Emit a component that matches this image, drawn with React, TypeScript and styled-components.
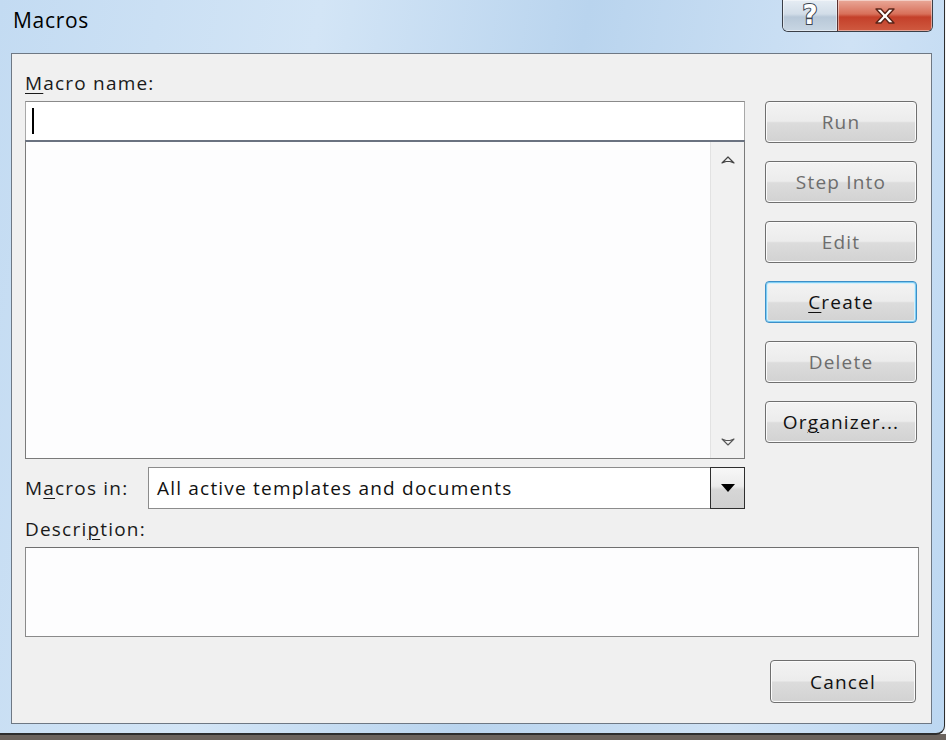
import React from 'react'
import styled, {createGlobalStyle} from 'styled-components'

const GlobalStyle = createGlobalStyle`
  html, body {
    margin: 0;
    padding: 0;
    background: #f4f6f8;
  }
  body {
    font-family: "Open Sans", "Noto Sans", "DejaVu Sans", sans-serif;
  }
`

const Page = styled.div`
  width: 946px;
  height: 740px;
  overflow: hidden;
  background: linear-gradient(180deg, #f4f6f8 0, #f4f6f8 734px, #6b635d 734px);
`

const Window = styled.div`
  width: 945px;
  height: 735px;
  box-sizing: border-box;
  display: flex;
  flex-direction: column;
  background: linear-gradient(100deg, #c3dbf2 0%, #d3e5f6 30%, #b9d4ee 55%, #cfe2f5 80%, #bcd7f1 100%);
  border-right: 1px solid #2d2d2d;
  border-bottom: 2px solid #2d2d2d;
  border-bottom-right-radius: 9px;
`

const TitleBar = styled.div`
  height: 53px;
  display: flex;
  align-items: flex-start;
  justify-content: space-between;
  padding: 0 11px 0 13px;
`

const Title = styled.div`
  font-size: 21px;
  letter-spacing: 0.7px;
  color: #000;
  padding-top: 6px;
`

const Captions = styled.div`
  display: flex;
  border: 1px solid #3a3f48;
  border-top: none;
  border-radius: 0 0 6px 6px;
  overflow: hidden;
  height: 31px;
`

const CaptionButton = styled.div<{ $close?: boolean }>`
  width: ${p => (p.$close ? '94px' : '54px')};
  display: flex;
  align-items: center;
  justify-content: center;
  border-left: ${p => (p.$close ? '1px solid #5a3030' : 'none')};
  background: ${p => p.$close
    ? 'linear-gradient(180deg, #e9a898 0%, #d8705a 45%, #c4402a 55%, #cf5a40 100%)'
    : 'linear-gradient(180deg, #e6edf4 0%, #d2dde8 45%, #b8c8d8 55%, #c8d6e3 100%)'};
  box-shadow: inset 0 0 0 1px rgba(255, 255, 255, 0.45);
`

const Help = styled.span`
  font-family: "DejaVu Sans", sans-serif;
  font-weight: bold;
  font-size: 26px;
  color: #fff;
  -webkit-text-stroke: 2px #3c4450;
  paint-order: stroke fill;
  line-height: 1;
  margin-top: -2px;
`

const Client = styled.div`
  flex: 1;
  margin: 0 12px 9px 11px;
  background: #f0f0f0;
  border: 1px solid #6e7884;
  padding: 17px 13px 0 13px;
  display: flex;
  flex-direction: column;
  letter-spacing: 1.2px;
`

const Top = styled.div`
  display: flex;
  gap: 20px;
`

const LeftCol = styled.div`
  width: 720px;
  display: flex;
  flex-direction: column;
`

const RightCol = styled.div`
  width: 152px;
  padding-top: 30px;
  display: flex;
  flex-direction: column;
  gap: 18px;
`

const Label = styled.div<{ $mt?: number }>`
  font-size: 19px;
  line-height: 24px;
  color: #1a1a1a;
  margin-top: ${p => p.$mt ?? 0}px;
  margin-bottom: 6px;
  u {
    text-decoration-thickness: 1px;
    text-underline-offset: 3px;
  }
`

const NameInput = styled.div`
  height: 39px;
  box-sizing: border-box;
  background: #fff;
  border: 1px solid #a8a8a8;
  border-top-color: #8a8a8a;
  border-bottom: none;
  display: flex;
  align-items: center;
  padding-left: 6px;
`

const Caret = styled.div`
  width: 2px;
  height: 26px;
  background: #000;
`

const ListBox = styled.div`
  height: 319px;
  box-sizing: border-box;
  background: #fdfdfe;
  border: 1px solid #7a7a7a;
  border-top: 2px solid #6a7280;
  display: flex;
  justify-content: flex-end;
`

const ScrollBar = styled.div`
  width: 33px;
  background: #f1f1f1;
  border-left: 1px solid #e2e2e2;
  display: flex;
  flex-direction: column;
  justify-content: space-between;
  align-items: center;
  padding: 14px 0 12px;
`

const ComboRow = styled.div`
  display: flex;
  align-items: center;
  margin-top: 8px;
  height: 42px;
`

const ComboLabel = styled(Label)`
  width: 123px;
  margin-bottom: 0;
`

const Combo = styled.div`
  flex: 1;
  height: 42px;
  box-sizing: border-box;
  background: #fff;
  border: 1px solid #8c8c8c;
  display: flex;
  align-items: stretch;
`

const ComboText = styled.div`
  flex: 1;
  font-size: 19px;
  color: #111;
  display: flex;
  align-items: center;
  padding-left: 8px;
`

const ComboButton = styled.div`
  width: 33px;
  border: 1px solid #2e2e2e;
  margin: -1px -1px -1px 0;
  background: linear-gradient(180deg, #f7f7f7 0%, #ececec 45%, #d6d6d6 55%, #d0d0d0 100%);
  display: flex;
  align-items: center;
  justify-content: center;
`

const Button = styled.div<{ $disabled?: boolean; $focus?: boolean; $w?: number }>`
  width: ${p => p.$w ?? 152}px;
  height: 42px;
  box-sizing: border-box;
  border: 1px solid ${p => (p.$focus ? '#3c8fc8' : '#6f6f6f')};
  border-radius: 4px;
  background: linear-gradient(180deg, #f3f3f3 0%, #ececec 48%, #dcdcdc 52%, #d2d2d2 100%);
  box-shadow: ${p => (p.$focus
    ? 'inset 0 0 0 1px #7fcdf3, inset 0 0 0 2px #d6f0fb'
    : 'inset 0 0 0 1px #fbfbfb')};
  display: flex;
  align-items: center;
  justify-content: center;
  font-size: 19px;
  color: ${p => (p.$disabled ? '#6d6d6d' : '#111')};
  u {
    text-decoration-thickness: 1px;
    text-underline-offset: 3px;
  }
`

const DescBox = styled.div`
  width: 894px;
  height: 90px;
  box-sizing: border-box;
  background: #fdfdfe;
  border: 1px solid #8a8a8a;
  border-top-color: #6f6f6f;
`

const Footer = styled.div`
  display: flex;
  justify-content: flex-end;
  padding: 23px 2px 0 0;
`

const CancelButton = styled(Button)`
  height: 43px;
`

function UpArrow() {
    return <svg width="14" height="8" viewBox="0 0 14 8">
        <path d="M1 7 L7 1 L13 7 L9 5.5 L5 5.5 Z" fill="none" stroke="#444" strokeWidth="1.2"
              strokeLinejoin="round"/>
    </svg>
}

function DownArrow() {
    return <svg width="14" height="8" viewBox="0 0 14 8">
        <path d="M1 1 L7 7 L13 1 L9 2.5 L5 2.5 Z" fill="none" stroke="#555" strokeWidth="1.1"
              strokeLinejoin="round"/>
    </svg>
}

export default function App() {
    return (
        <Page>
            <GlobalStyle/>
            <Window>
                <TitleBar>
                    <Title>Macros</Title>
                    <Captions>
                        <CaptionButton><Help>?</Help></CaptionButton>
                        <CaptionButton $close>
                            <svg width="24" height="18" viewBox="0 0 24 18">
                                <path d="M3 2 L8 2 L12 6.5 L16 2 L21 2 L14.5 9 L21 16 L16 16 L12 11.5 L8 16 L3 16 L9.5 9 Z"
                                      fill="#fff" stroke="#5a2418" strokeWidth="1.4" strokeLinejoin="round"/>
                            </svg>
                        </CaptionButton>
                    </Captions>
                </TitleBar>
                <Client>
                    <Top>
                        <LeftCol>
                            <Label><u>M</u>acro name:</Label>
                            <NameInput><Caret/></NameInput>
                            <ListBox>
                                <ScrollBar>
                                    <UpArrow/>
                                    <DownArrow/>
                                </ScrollBar>
                            </ListBox>
                            <ComboRow>
                                <ComboLabel>M<u>a</u>cros in:</ComboLabel>
                                <Combo>
                                    <ComboText>All active templates and documents</ComboText>
                                    <ComboButton>
                                        <svg width="14" height="8" viewBox="0 0 14 8">
                                            <path d="M0 0 L14 0 L7 8 Z" fill="#000"/>
                                        </svg>
                                    </ComboButton>
                                </Combo>
                            </ComboRow>
                        </LeftCol>
                        <RightCol>
                            <Button $disabled>Run</Button>
                            <Button $disabled>Step Into</Button>
                            <Button $disabled>Edit</Button>
                            <Button $focus><span><u>C</u>reate</span></Button>
                            <Button $disabled>Delete</Button>
                            <Button><span>Or<u>g</u>anizer...</span></Button>
                        </RightCol>
                    </Top>
                    <Label $mt={8}>Descri<u>p</u>tion:</Label>
                    <DescBox/>
                    <Footer>
                        <CancelButton $w={146}>Cancel</CancelButton>
                    </Footer>
                </Client>
            </Window>
        </Page>
    )
}
